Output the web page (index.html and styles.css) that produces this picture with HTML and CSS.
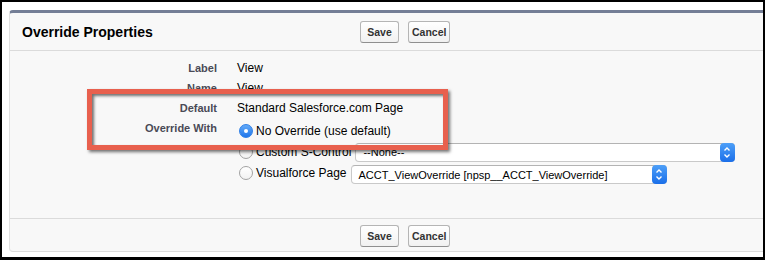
FILE: index.html
```html
<!DOCTYPE html>
<html lang="en">
<head>
  <meta charset="UTF-8">
  <title>Override Properties</title>
  <link rel="stylesheet" href="styles.css">
</head>
<body>

<div class="frame">
  <div class="panel">
    <!-- Header with title and buttons -->
    <div class="panel-header">
      <h2 class="panel-title">Override Properties</h2>
      <div class="panel-buttons">
        <button class="btn btn-save">Save</button>
        <button class="btn">Cancel</button>
      </div>
    </div>

    <!-- Detail rows -->
    <div class="panel-body">
      <div class="detail">
        <div class="label">Label</div>
        <div class="value">View</div>

        <div class="label">Name</div>
        <div class="value">View</div>

        <div class="label">Default</div>
        <div class="value">Standard Salesforce.com Page</div>

        <div class="label">Override With</div>
        <div class="options">
          <div class="option">
            <span class="radio checked"></span>No Override (use default)
          </div>
          <div class="option">
            <span class="radio"></span>Custom S-Control
            <div class="select select-wide">
              <span class="select-text">--None--</span>
              <span class="select-arrow">
                <svg width="14" height="19" viewBox="0 0 14 19">
                  <path d="M4.5 7.5 L7 5 L9.5 7.5" />
                  <path d="M4.5 11.5 L7 14 L9.5 11.5" />
                </svg>
              </span>
            </div>
          </div>
          <div class="option">
            <span class="radio"></span>Visualforce Page
            <div class="select select-page">
              <span class="select-text">ACCT_ViewOverride [npsp__ACCT_ViewOverride]</span>
              <span class="select-arrow">
                <svg width="14" height="19" viewBox="0 0 14 19">
                  <path d="M4.5 7.5 L7 5 L9.5 7.5" />
                  <path d="M4.5 11.5 L7 14 L9.5 11.5" />
                </svg>
              </span>
            </div>
          </div>
        </div>
      </div>
    </div>

    <!-- Footer buttons -->
    <div class="panel-footer">
      <button class="btn btn-save">Save</button>
      <button class="btn">Cancel</button>
    </div>
  </div>

  <!-- Red annotation box over Default / Override With -->
  <div class="highlight"></div>
</div>

</body>
</html>
```

FILE: styles.css
```css
body {
  margin: 0;
  padding: 0;
  font-family: "Liberation Sans", Arial, sans-serif;
  background-color: #fff;
}

.frame {
  position: relative;
  width: 765px;
  height: 260px;
  box-sizing: border-box;
  border: 2px solid #000;
  border-bottom-width: 3px;
  padding: 8px 0 0 7px;
  overflow: hidden;
  background-color: #fff;
}

.panel {
  margin-right: -20px;
  background-color: #f8f8f8;
  border-top: 3px solid #747e96;
  border-left: 1px solid #e0e0e0;
  border-bottom: 1px solid #dcdcdc;
  border-radius: 4px 0 0 4px;
}

/* header */
.panel-header {
  display: flex;
  align-items: center;
  height: 37px;
  border-bottom: 1px solid #dbdbdb;
}

.panel-title {
  width: 350px;
  box-sizing: border-box;
  margin: 0;
  padding-left: 12px;
  font-size: 14px;
  font-weight: bold;
  color: #000;
}

.panel-buttons {
  display: flex;
  gap: 9px;
}

.btn {
  height: 22px;
  padding: 0 3px;
  font-family: "Liberation Sans", Arial, sans-serif;
  font-size: 10.5px;
  font-weight: bold;
  color: #333;
  background: linear-gradient(#ffffff, #f1f1f1);
  border: 1px solid #b5b5b5;
  border-bottom-color: #8f8f8f;
  border-radius: 3px;
  cursor: pointer;
}

.btn-save {
  min-width: 39px;
}

/* body */
.panel-body {
  padding: 7px 0 35px;
}

.detail {
  display: grid;
  grid-template-columns: 207px 1fr;
  column-gap: 20px;
}

.label {
  text-align: right;
  font-size: 11px;
  font-weight: bold;
  line-height: 20px;
  color: #4a4a56;
}

.value {
  font-size: 12px;
  line-height: 20px;
  color: #000;
}

.options {
  display: flex;
  flex-direction: column;
  gap: 1px;
  padding-top: 3px;
}

.option {
  display: flex;
  align-items: center;
  height: 20px;
  font-size: 12px;
  color: #000;
}

.radio {
  width: 14px;
  height: 14px;
  box-sizing: border-box;
  margin: 0 3px 0 2px;
  border: 1px solid #a3a3a3;
  border-radius: 50%;
  background: linear-gradient(#ffffff, #f2f2f2);
}

.radio.checked {
  position: relative;
  border-color: #2f7fe6;
  background: linear-gradient(#63aaf8, #1f76eb);
}

.radio.checked::after {
  content: "";
  position: absolute;
  left: 4px;
  top: 4px;
  width: 4px;
  height: 4px;
  border-radius: 50%;
  background-color: #fff;
}

/* mac style select */
.select {
  display: flex;
  align-items: center;
  height: 19px;
  box-sizing: border-box;
  margin-left: 4px;
  padding-left: 7px;
  font-size: 11px;
  color: #000;
  background-color: #fff;
  border: 1px solid #c9c9c9;
  border-top-color: #b3b3b3;
  border-radius: 4px;
}

.select-wide {
  width: 380px;
}

.select-page {
  width: 316px;
  margin-top: 3px;
}

.select-arrow {
  display: flex;
  width: 15px;
  height: 19px;
  margin: -1px -1px -1px auto;
  border-radius: 4px;
  background: linear-gradient(#4d9ff8, #1b6fe9);
}

.select-arrow path {
  fill: none;
  stroke: #fff;
  stroke-width: 1.4;
}

/* footer */
.panel-footer {
  display: flex;
  gap: 9px;
  height: 33px;
  box-sizing: border-box;
  padding: 6px 0 0 350px;
  border-top: 1px solid #dbdbdb;
}

/* annotation */
.highlight {
  position: absolute;
  left: 85px;
  top: 87px;
  width: 361px;
  height: 61px;
  box-sizing: border-box;
  border: 5px solid #e8604e;
  box-shadow: 2px 2px 3px rgba(0, 0, 0, 0.55), inset 2px 2px 3px rgba(0, 0, 0, 0.55);
}
```
